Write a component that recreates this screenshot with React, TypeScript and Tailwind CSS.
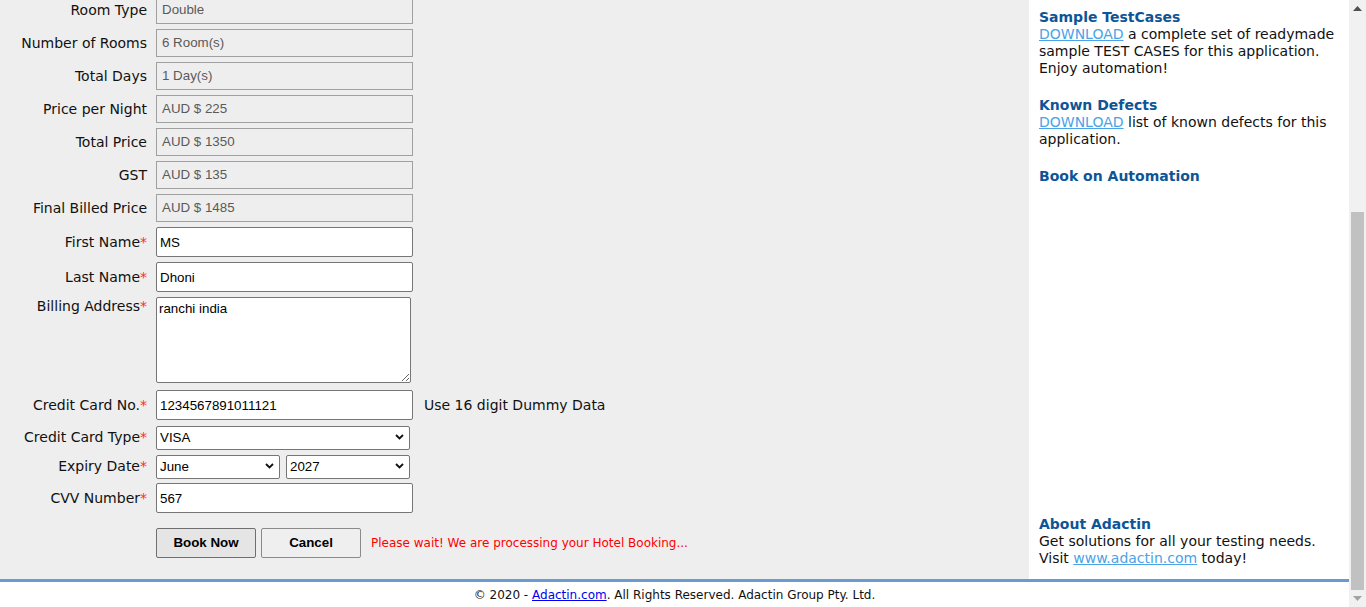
import React from "react";

const LABEL = "w-[147px] shrink-0 text-right text-[14px] leading-[17px] text-[#111]";
const V = { fontFamily: '"DejaVu Sans", Verdana, sans-serif' };
const A = { fontFamily: '"Liberation Sans", Arial, sans-serif' };

function ReadRow({ label, value }: { label: string; value: string }) {
  return (
    <div className="flex items-center mb-[5px]">
      <div className={LABEL}>{label}</div>
      <div
        className="ml-[9px] w-[257px] h-[28px] border border-[#a0a0a0] bg-[#eeeeee] pl-[5px] flex items-center text-[13.33px] text-[#5a5a5a]"
        style={A}
      >
        {value}
      </div>
    </div>
  );
}

function Req({ label }: { label: string }) {
  return (
    <>
      {label}
      <span className="text-[#ff2a2a]">*</span>
    </>
  );
}

function Chevron() {
  return (
    <svg className="pointer-events-none absolute right-[6px] top-1/2 -translate-y-1/2" width="9" height="6" viewBox="0 0 9 6">
      <path d="M1 1 L4.5 4.5 L8 1" fill="none" stroke="#111" strokeWidth="1.8" />
    </svg>
  );
}

function Select({ value, w }: { value: string; w: string }) {
  return (
    <div className={`relative ${w} h-[24px]`}>
      <select
        defaultValue={value}
        className="appearance-none w-full h-full border border-[#767676] rounded-[2px] bg-white pl-[3px] text-[13.33px] text-black"
        style={A}
      >
        <option>{value}</option>
      </select>
      <Chevron />
    </div>
  );
}

export default function App() {
  return (
    <div className="w-[1366px] h-[607px] overflow-hidden flex" style={V}>
      <div className="w-[1349px] flex flex-col">
        <div className="h-[579px] flex overflow-hidden">
          {/* Left form */}
          <div className="w-[1029px] bg-[#eeeeee] overflow-hidden">
            <div className="-mt-[4px]">
              <ReadRow label="Room Type" value="Double" />
              <ReadRow label="Number of Rooms" value="6 Room(s)" />
              <ReadRow label="Total Days" value="1 Day(s)" />
              <ReadRow label="Price per Night" value="AUD $ 225" />
              <ReadRow label="Total Price" value="AUD $ 1350" />
              <ReadRow label="GST" value="AUD $ 135" />
              <ReadRow label="Final Billed Price" value="AUD $ 1485" />

              <div className="flex items-center mb-[5px]">
                <div className={LABEL}><Req label="First Name" /></div>
                <input
                  defaultValue="MS"
                  className="ml-[9px] w-[257px] h-[30px] border border-[#767676] rounded-[2px] bg-white px-[3px] text-[13.33px] text-black"
                  style={A}
                />
              </div>
              <div className="flex items-center mb-[5px]">
                <div className={LABEL}><Req label="Last Name" /></div>
                <input
                  defaultValue="Dhoni"
                  className="ml-[9px] w-[257px] h-[30px] border border-[#767676] rounded-[2px] bg-white px-[3px] text-[13.33px] text-black"
                  style={A}
                />
              </div>
              <div className="flex items-start mb-[7px]">
                <div className={`${LABEL} pt-[1px]`}><Req label="Billing Address" /></div>
                <textarea
                  defaultValue="ranchi india"
                  className="ml-[9px] w-[255px] h-[86px] border border-[#767676] rounded-[2px] bg-white px-[2px] py-[3px] text-[13.33px] leading-[16px] text-black block"
                  style={A}
                />
              </div>
              <div className="flex items-center mb-[5px]">
                <div className={LABEL}><Req label="Credit Card No." /></div>
                <input
                  defaultValue="1234567891011121"
                  className="ml-[9px] w-[257px] h-[30px] border border-[#767676] rounded-[2px] bg-white px-[3px] text-[13.33px] text-black"
                  style={A}
                />
                <span className="ml-[11px] text-[14px] text-[#111]">Use 16 digit Dummy Data</span>
              </div>
              <div className="flex items-center mb-[5px]">
                <div className={LABEL}><Req label="Credit Card Type" /></div>
                <div className="ml-[9px]">
                  <Select value="VISA" w="w-[254px]" />
                </div>
              </div>
              <div className="flex items-center mb-[5px]">
                <div className={LABEL}><Req label="Expiry Date" /></div>
                <div className="ml-[9px] flex gap-[6px]">
                  <Select value="June" w="w-[124px]" />
                  <Select value="2027" w="w-[124px]" />
                </div>
              </div>
              <div className="flex items-center mb-[15px]">
                <div className={LABEL}><Req label="CVV Number" /></div>
                <input
                  defaultValue="567"
                  className="ml-[9px] w-[257px] h-[30px] border border-[#767676] rounded-[2px] bg-white px-[3px] text-[13.33px] text-black"
                  style={A}
                />
              </div>
              <div className="flex items-center">
                <div className="w-[156px] shrink-0" />
                <button
                  className="w-[100px] h-[30px] border border-[#6f6f6f] rounded-[2px] bg-[#e5e5e5] text-[13.33px] font-bold text-black"
                  style={A}
                >
                  Book Now
                </button>
                <button
                  className="ml-[5px] w-[100px] h-[30px] border border-[#8a8a8a] rounded-[2px] bg-[#efefef] text-[13.33px] font-bold text-black"
                  style={A}
                >
                  Cancel
                </button>
                <span className="ml-[10px] text-[12px] text-[#ff0000]">
                  Please wait! We are processing your Hotel Booking...
                </span>
              </div>
            </div>
          </div>

          {/* Sidebar */}
          <div className="w-[320px] bg-white pl-[10px] pr-[8px] pt-[9px] pb-[12px] flex flex-col text-[14px] leading-[17px] text-[#111]">
            <div className="mb-[20px]">
              <div className="font-bold text-[#0d5596]">Sample TestCases</div>
              <p>
                <a className="text-[#4aa3e6] underline">DOWNLOAD</a> a complete set of readymade sample TEST CASES for this application. Enjoy automation!
              </p>
            </div>
            <div className="mb-[20px]">
              <div className="font-bold text-[#0d5596]">Known Defects</div>
              <p>
                <a className="text-[#4aa3e6] underline">DOWNLOAD</a> list of known defects for this application.
              </p>
            </div>
            <div className="font-bold text-[#0d5596]">Book on Automation</div>
            <div className="mt-auto">
              <div className="font-bold text-[#0d5596]">About Adactin</div>
              <div>Get solutions for all your testing needs.</div>
              <div>
                Visit <a className="text-[#4aa3e6] underline">www.adactin.com</a> today!
              </div>
            </div>
          </div>
        </div>
        <div className="h-[3px] bg-[#6a9bd0]" />
        <div className="flex-1 bg-white flex items-center justify-center text-[12px] text-[#111]">
          <p>
            © 2020 - <a className="text-[#0000ee] underline">Adactin.com</a>. All Rights Reserved. Adactin Group Pty. Ltd.
          </p>
        </div>
      </div>

      {/* Scrollbar */}
      <div className="w-[17px] bg-[#f1f1f1] flex flex-col">
        <div className="h-[17px] flex items-center justify-center">
          <svg width="9" height="5" viewBox="0 0 9 5">
            <path d="M0 5 L4.5 0 L9 5 Z" fill="#505050" />
          </svg>
        </div>
        <div className="h-[195px]" />
        <div className="flex-1 px-[2px]">
          <div className="h-full bg-[#c1c1c1]" />
        </div>
        <div className="h-[17px] flex items-center justify-center">
          <svg width="9" height="5" viewBox="0 0 9 5">
            <path d="M0 0 L9 0 L4.5 5 Z" fill="#a3a3a3" />
          </svg>
        </div>
      </div>
    </div>
  );
}
